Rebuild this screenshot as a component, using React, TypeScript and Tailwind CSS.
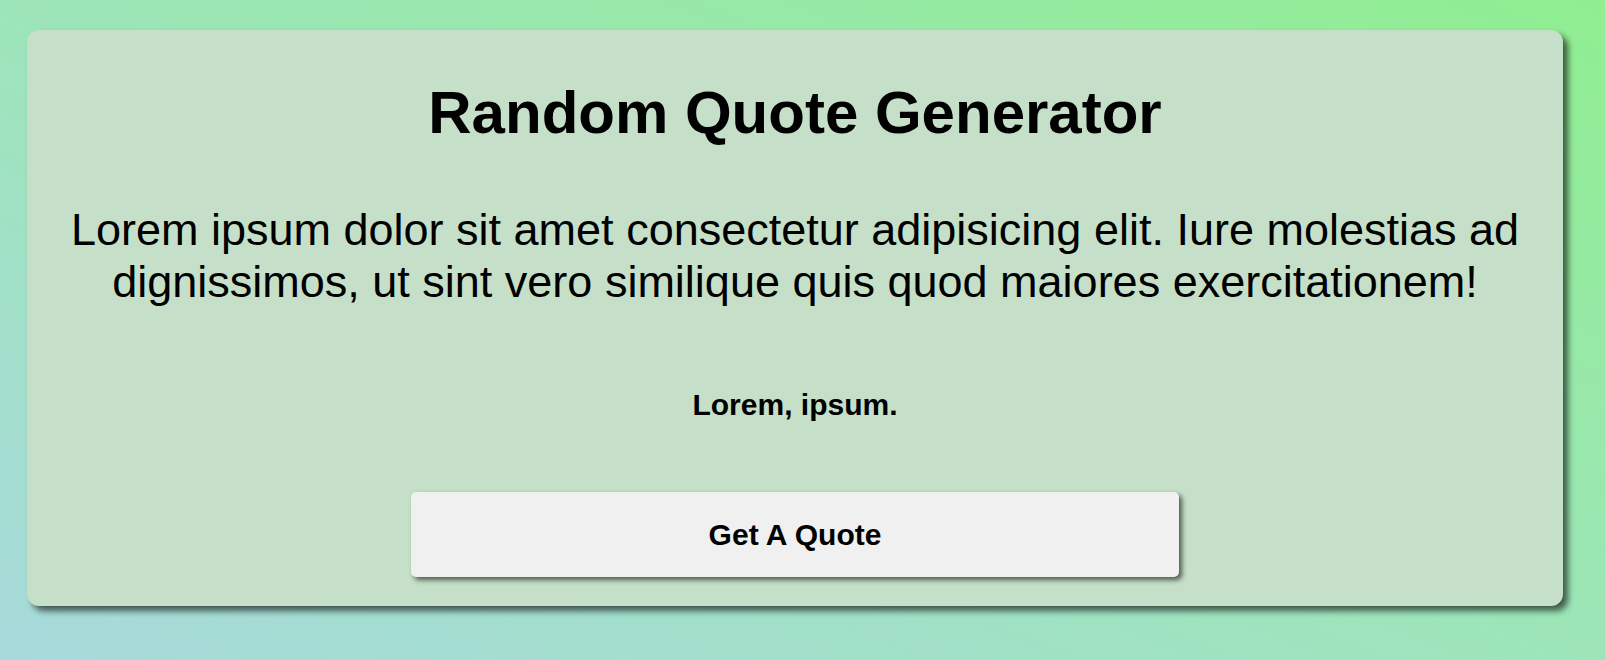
const quote = {
  text: 'Lorem ipsum dolor sit amet consectetur adipisicing elit. Iure molestias ad dignissimos, ut sint vero similique quis quod maiores exercitationem!',
  author: 'Lorem, ipsum.',
};

export default function App() {
  return (
    <div
      className="min-h-screen w-full bg-linear-to-tr from-[#a8dadc] to-[#90ee90] pl-[27px] pt-[30px] pb-[30px] text-black"
      style={{ fontFamily: '"Liberation Sans", Arial, Helvetica, sans-serif' }}
    >
      <div className="flex w-[1536px] flex-col items-center rounded-xl bg-[#c5dfc8] px-[30px] pt-[48px] pb-[29px] text-center shadow-[5px_5px_6px_rgba(0,0,0,0.6)]">
        <h1 className="text-[60px] leading-[normal] font-bold">Random Quote Generator</h1>
        <p className="mt-[57px] text-[45px] leading-[normal]">{quote.text}</p>
        <p className="mt-[80px] text-[30px] leading-[normal] font-bold">{quote.author}</p>
        <button
          type="button"
          className="mt-[70px] h-[85px] w-[768px] cursor-pointer rounded-[5px] bg-[#f0f0f0] text-[30px] leading-[normal] font-bold shadow-[3px_3px_5px_rgba(0,0,0,0.6)]"
        >
          Get A Quote
        </button>
      </div>
    </div>
  );
}
